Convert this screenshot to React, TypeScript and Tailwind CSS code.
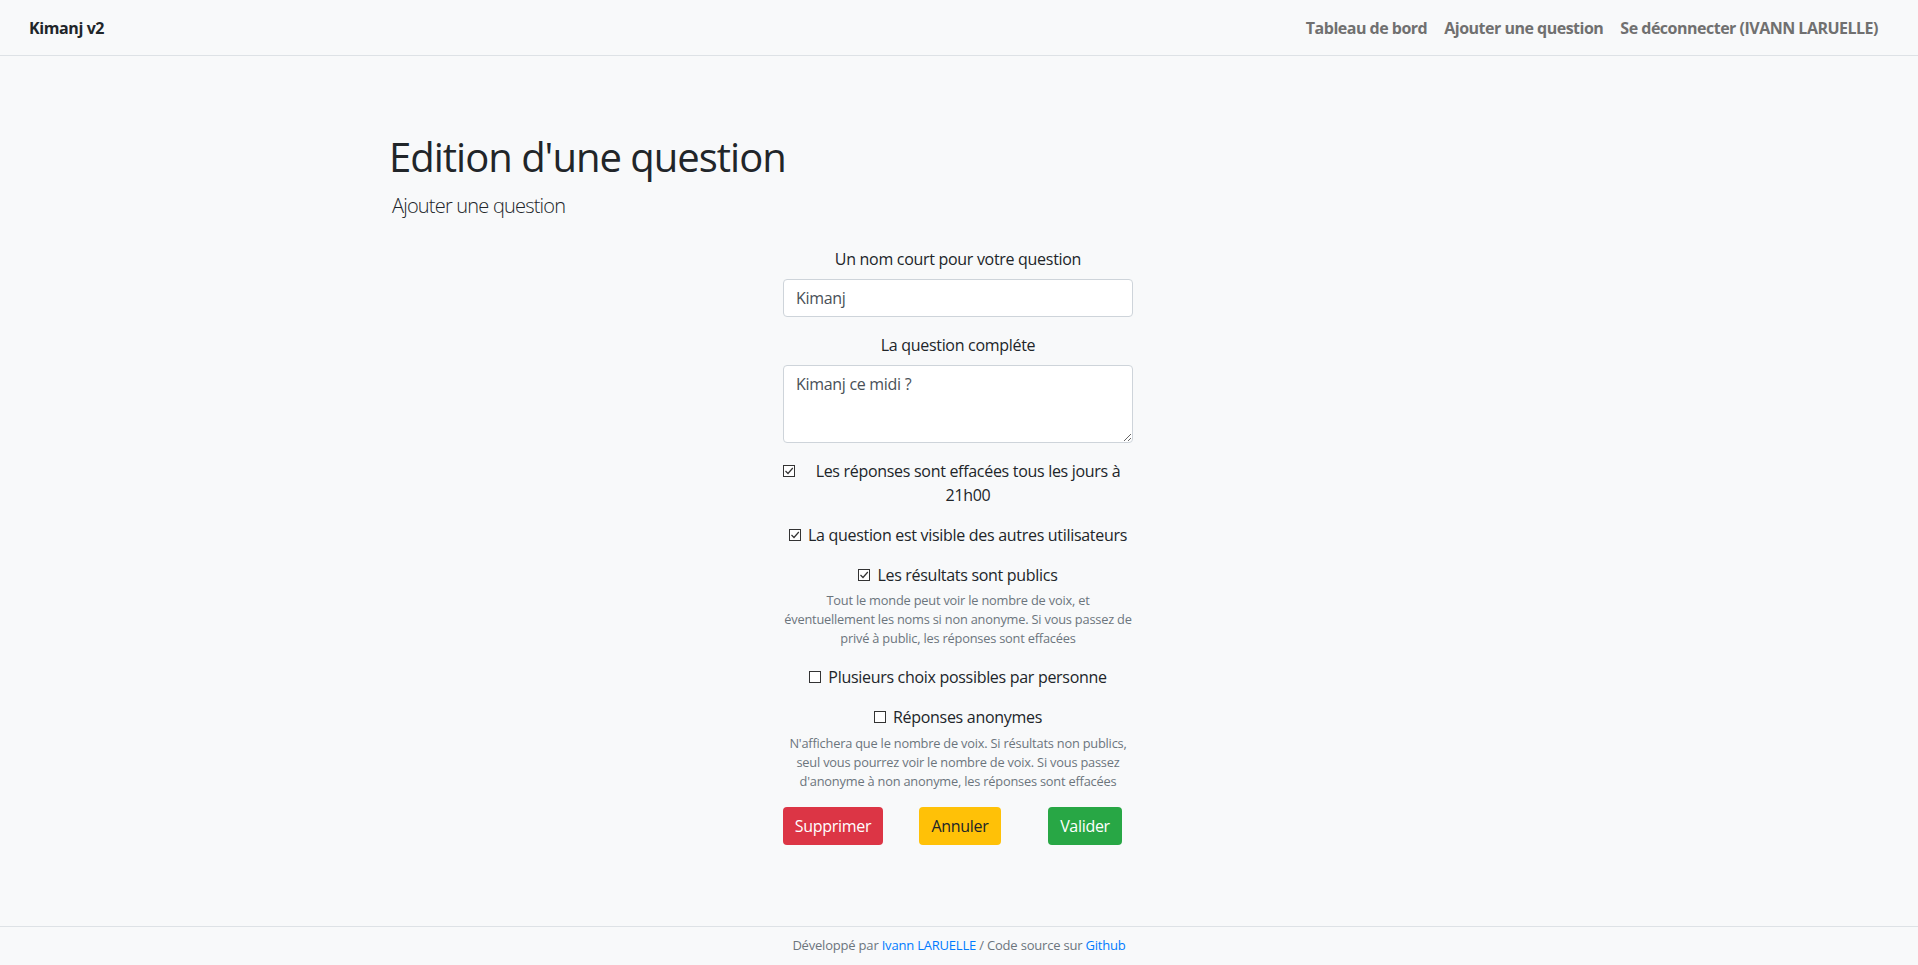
import React from "react";

const font = { fontFamily: '"Open Sans", "Noto Sans", "Liberation Sans", sans-serif' };

function Box({ checked }: { checked: boolean }) {
  return (
    <span className="inline-block w-[12px] h-[12px] border border-[#333333] bg-white relative shrink-0">
      {checked && (
        <svg viewBox="0 0 10 10" className="absolute inset-0 w-[10px] h-[10px]">
          <path d="M1.5 5 L4 7.5 L8.8 2" fill="none" stroke="#333333" strokeWidth="1.2" />
        </svg>
      )}
    </span>
  );
}

function CheckRow({ checked, children }: { checked: boolean; children: React.ReactNode }) {
  return (
    <div className="text-center leading-[24px]">
      <span className="inline-flex items-baseline gap-[7px]">
        <Box checked={checked} />
        <span>{children}</span>
      </span>
    </div>
  );
}

export default function App() {
  return (
    <div className="min-h-screen flex flex-col bg-[#f8f9fa] text-[#212529] text-[16px]" style={font}>
      <nav className="h-[56px] shrink-0 border-b border-[#dee2e6] flex items-center justify-between pl-[29px] pr-[40px]">
        <span className="font-bold text-[16px] tracking-[-0.4px] text-[#212529]">Kimanj v2</span>
        <div className="flex gap-[17px] font-bold text-[16px] tracking-[-0.5px] text-[#707070]">
          <a>Tableau de bord</a>
          <a>Ajouter une question</a>
          <a>Se déconnecter (IVANN LARUELLE)</a>
        </div>
      </nav>

      <main className="flex-1">
        <div className="w-[1140px] mx-auto pt-[77px]">
          <h1 className="text-[40px] leading-[48px] font-normal tracking-[-1px]">Edition d'une question</h1>
          <p className="mt-[10px] ml-[3px] text-[20px] leading-[30px] font-light tracking-[-0.8px]">Ajouter une question</p>
        </div>

        <div className="flex justify-center pr-[2px]">
          <form className="w-[350px] mt-[26px] tracking-[-0.3px]">
            <label className="block text-center leading-[24px] mb-[8px]">Un nom court pour votre question</label>
            <input
              readOnly
              defaultValue="Kimanj"
              className="block w-full h-[38px] px-[12px] bg-white border border-[#ced4da] rounded-[4px] text-[#495057] outline-none"
            />
            <label className="block text-center leading-[24px] mt-[16px] mb-[8px]">La question compléte</label>
            <textarea
              readOnly
              defaultValue="Kimanj ce midi ?"
              className="block w-full h-[78px] px-[12px] py-[6px] leading-[24px] bg-white border border-[#ced4da] rounded-[4px] text-[#495057] outline-none"
            />

            <div className="mt-[16px] flex items-baseline gap-[8px] leading-[24px]">
              <Box checked />
              <span className="flex-1 text-center">
                Les réponses sont effacées tous les jours à
                <br />
                21h00
              </span>
            </div>

            <div className="mt-[16px]">
              <CheckRow checked>La question est visible des autres utilisateurs</CheckRow>
            </div>

            <div className="mt-[16px]">
              <CheckRow checked>Les résultats sont publics</CheckRow>
              <p className="mt-[4px] text-center text-[12.8px] leading-[19.2px] text-[#6c757d] tracking-[-0.2px]">
                Tout le monde peut voir le nombre de voix, et
                <br />
                éventuellement les noms si non anonyme. Si vous passez de
                <br />
                privé à public, les réponses sont effacées
              </p>
            </div>

            <div className="mt-[16px]">
              <CheckRow checked={false}>Plusieurs choix possibles par personne</CheckRow>
            </div>

            <div className="mt-[16px]">
              <CheckRow checked={false}>Réponses anonymes</CheckRow>
              <p className="mt-[5px] text-center text-[12.8px] leading-[19.2px] text-[#6c757d] tracking-[-0.2px]">
                N'affichera que le nombre de voix. Si résultats non publics,
                <br />
                seul vous pourrez voir le nombre de voix. Si vous passez
                <br />
                d'anonyme à non anonyme, les réponses sont effacées
              </p>
            </div>

            <div className="mt-[16px] flex">
              <button type="button" className="w-[100px] h-[38px] rounded-[4px] bg-[#dc3545] text-white text-[16px]">
                Supprimer
              </button>
              <button type="button" className="ml-[36px] w-[82px] h-[38px] rounded-[4px] bg-[#ffc107] text-[#212529] text-[16px]">
                Annuler
              </button>
              <button type="button" className="ml-[47px] w-[74px] h-[38px] rounded-[4px] bg-[#28a745] text-white text-[16px]">
                Valider
              </button>
            </div>
          </form>
        </div>
      </main>

      <footer className="h-[39px] shrink-0 border-t border-[#dee2e6] flex items-center justify-center text-[13px] text-[#6c757d] tracking-[-0.2px]">
        <span>
          Développé par <a className="text-[#007bff]">Ivann LARUELLE</a> / Code source sur{" "}
          <a className="text-[#007bff]">Github</a>
        </span>
      </footer>
    </div>
  );
}
